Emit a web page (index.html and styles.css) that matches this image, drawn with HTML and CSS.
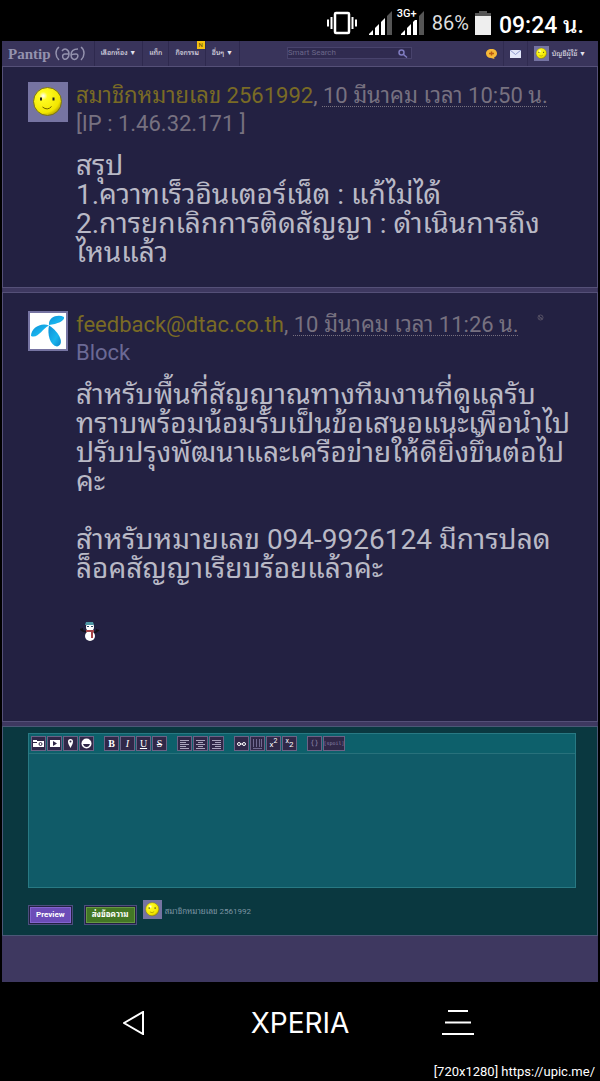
FILE: index.html
```html
<!DOCTYPE html>
<html lang="th">
<head>
<meta charset="utf-8">
<meta name="viewport" content="width=device-width, initial-scale=1">
<title>Pantip</title>
<link rel="stylesheet" href="styles.css">
</head>
<body>
<svg class="defs" width="0" height="0" aria-hidden="true">
  <defs>
    <radialGradient id="sun" cx="35%" cy="30%" r="75%"><stop offset="0" stop-color="#fff" /><stop offset=".2" stop-color="#fffb20" /><stop offset=".8" stop-color="#f2e600" /><stop offset="1" stop-color="#b3a000" /></radialGradient>
    <linearGradient id="petal" x1="0" y1="0" x2="1" y2="1"><stop offset="0" stop-color="#0d8fd6" /><stop offset=".6" stop-color="#19b5ee" /><stop offset="1" stop-color="#0a84c8" /></linearGradient>
  </defs>
  <symbol id="smiley" viewBox="0 0 40 40">
    <rect width="40" height="40" fill="#7674a2" />
    <circle cx="19.500" cy="19.500" r="14" fill="url(#sun)" stroke="#77701c" />
    <path d="M13 15.500v3M25.500 15.500v3" stroke="#222" stroke-width="2" />
    <path d="M14.500 25q5 4 9-.5" fill="none" stroke="#706000" />
  </symbol>
</svg>

<header class="status">
  <svg width="30" height="24" viewBox="0 0 30 24" fill="none" stroke="#fff" stroke-width="2"><rect x="8" y="2" width="14" height="20" rx="1" stroke-width="2.500" /><path d="M4.500 6v12M1 8.500v7M25.500 6v12M29 8.500v7" /></svg>
  <svg class="signal-a" width="23" height="24" viewBox="0 0 23 24"><path fill="#fff" d="M0 24v-1l4-4v5zM6 24v-7l4-4v11zM12 24V11l4-4v17z" /><path fill="#555" d="M18 24V5l5-5v24z" /></svg>
  <div class="mobile">
    <svg width="23" height="24" viewBox="0 0 23 24"><path fill="#fff" d="M0 24v-1l4-4v5zM6 24v-7l4-4v11zM12 24V11l4-4v17z" /><path fill="#555" d="M18 24V5l5-5v24z" /></svg>
    <span>3G+</span>
  </div>
  <span class="percent">86%</span>
  <svg width="16" height="24" viewBox="0 0 16 24"><path fill="#555" d="M4 0h8v2h4v4H0V2h4z" /><path fill="#eee" d="M0 5h16v19H0z" /></svg>
  <span class="clock">09:24 น.</span>
</header>

<main class="screen">
  <nav class="topbar">
    <a class="brand" href="#">Pantip
      <svg width="30" height="15" viewBox="0 0 30 15" fill="none" stroke="currentColor" stroke-width="1.500"><path d="M4 1C0 4 0 10 4 14M26 1c4 3 4 9 0 13" /><path d="M7 5c3-4 7-1 7 3s-3 6-5 5-2-5 1-5h4M23 3c-4 0-7 2-7 6s3 5 5 4 3-5 0-5-5 0-5 2" /></svg>
    </a>
    <a class="item" href="#">เลือกห้อง ▼</a>
    <a class="item" href="#">แท็ก</a>
    <a class="item flagged" href="#">กิจกรรม<span class="flag">N</span></a>
    <a class="item last" href="#">อื่นๆ ▼</a>
    <form class="search">
      <input type="search" placeholder="Smart Search" aria-label="Smart Search">
      <button type="button" aria-label="Search"><svg width="10" height="9" viewBox="0 0 10 9" fill="none" stroke="#807cc0" stroke-width="1.500"><circle cx="3.500" cy="3.500" r="2.500" /><path d="M5.500 5.500 9 8.500" /></svg></button>
    </form>
    <a class="mini" href="#" aria-label="Chat"><svg width="11" height="10" viewBox="0 0 11 10"><path fill="#f6b938" d="M5.500 0C9 0 11 2 11 4.500 11 6.500 9.500 8 8 8.500L8.500 10 5 9C2 9 0 7 0 4.500S2 0 5.500 0z" /><path stroke="#b85b13" stroke-width="1.500" d="M5.500 2.500v4M3 4.500h5" /></svg></a>
    <a class="mini" href="#" aria-label="Mail"><svg width="11" height="8" viewBox="0 0 11 8"><path fill="#e4e8fa" d="M0 0h11v8H0z" /><path fill="none" stroke="#8f9bcf" d="m0 0 5.500 4.500L11 0" /></svg></a>
    <a class="account" href="#"><svg width="15" height="15"><use href="#smiley" /></svg>บัญชีผู้ใช้ ▼</a>
  </nav>

  <article class="post">
    <svg class="avatar" width="40" height="40" role="img" aria-label="avatar"><use href="#smiley" /></svg>
    <div class="content">
      <div class="meta"><a class="author" href="#">สมาชิกหมายเลข 2561992</a>, <abbr>10 มีนาคม เวลา 10:50 น.</abbr><br>[IP : 1.46.32.171 ]</div>
      <p>สรุป<br>1.ควาทเร็วอินเตอร์เน็ต : แก้ไม่ได้<br>2.การยกเลิกการติดสัญญา : ดำเนินการถึง<br>ไหนแล้ว</p>
    </div>
  </article>

  <article class="post reply">
    <svg class="avatar" width="40" height="40" viewBox="0 0 40 40" role="img" aria-label="dtac"><rect x="1" y="1" width="38" height="38" fill="#fff" stroke="#7674a2" stroke-width="2" /><g fill="url(#petal)"><path d="M21 14C20 6 30 3 36 6c1 4-7 7-15 8z" /><path d="M21 14.500C13 11 3 17 3 25c7 3 11-7 18-10.500z" /><path d="M21 14.500c-2 9 1 20 8 21 8-2 3-14-8-21z" /></g></svg>
    <div class="content">
      <div class="meta"><a class="author" href="#">feedback@dtac.co.th</a>, <abbr>10 มีนาคม เวลา 11:26 น.</abbr><br><a class="block" href="#">Block</a></div>
      <p>สำหรับพื้นที่สัญญาณทางทีมงานที่ดูแลรับ<br>ทราบพร้อมน้อมรับเป็นข้อเสนอแนะเพื่อนำไป<br>ปรับปรุงพัฒนาและเครือข่ายให้ดียิ่งขึ้นต่อไป<br>ค่ะ</p>
      <p>สำหรับหมายเลข 094-9926124 มีการปลด<br>ล็อคสัญญาเรียบร้อยแล้วค่ะ</p>
      <svg class="snowman" width="20" height="20" viewBox="0 0 20 20"><path d="M0 8l3 2 4 1M19 9l-3 2-4 1M2 7l1 3M17 8l-1 3" stroke="#14111a" stroke-width="1.500" fill="none" /><circle cx="10" cy="15" r="5" fill="#fff" /><circle cx="10" cy="6" r="4" fill="#fff" /><path d="M6 1h7l1 3H5z" fill="#4f98a5" /><path d="M7 5h2v1H7zM11 5h2v1h-2z" fill="#2c4862" /><path d="M6 9h8v2h-1v6h-2v-6H6z" fill="#a64448" /></svg>
    </div>
    <svg class="ban" width="7" height="7" viewBox="0 0 7 7" fill="none" stroke="#555064"><circle cx="3.500" cy="3.500" r="2.500" /><path d="m1.500 1.500 4 4M2 4h3" /></svg>
  </article>

  <form class="compose">
    <div class="editor">
      <div class="tools">
        <div class="group">
          <button type="button" aria-label="Photo"><svg viewBox="0 0 13 13"><path fill="#fff" d="M1 4V3h4v1h7v6H1z" /><path fill="#302848" d="M1 5h4v1H1z" /><circle cx="8.500" cy="7" r="1.500" fill="#fff" stroke="#302848" /></svg></button>
          <button type="button" aria-label="Video"><svg viewBox="0 0 13 13"><path fill="#fff" d="M2 3h10v7H2z" /><path fill="#302848" d="m5 4 4 2.500L5 9z" /></svg></button>
          <button type="button" aria-label="Map"><svg viewBox="0 0 13 13"><path fill="#fff" d="M6.500 11C5 8 4 6.500 4 4.500a2.500 2.500 0 0 1 5 0c0 2-1 3.500-2.500 6.500z" /><circle cx="6.500" cy="4.500" r="1" fill="#302848" /></svg></button>
          <button type="button" aria-label="Emoticon"><svg viewBox="0 0 13 13"><circle cx="6.500" cy="6.500" r="5" fill="#fff" /><path fill="#302848" d="M3 7h7q-1 3-3.500 3T3 7z" /></svg></button>
        </div>
        <div class="group">
          <button type="button" class="bold">B</button>
          <button type="button" class="italic">I</button>
          <button type="button" class="under">U</button>
          <button type="button" class="strike">S</button>
        </div>
        <div class="group">
          <button type="button" aria-label="Left"><svg viewBox="0 0 13 13"><path stroke="#aaa5bd" d="M2 3.500h9M2 5.500h6M2 7.500h9M2 9.500h6M2 11.500h9" /></svg></button>
          <button type="button" aria-label="Center"><svg viewBox="0 0 13 13"><path stroke="#aaa5bd" d="M2 3.500h9M4 5.500h5M2 7.500h9M4 9.500h5M2 11.500h9" /></svg></button>
          <button type="button" aria-label="Right"><svg viewBox="0 0 13 13"><path stroke="#aaa5bd" d="M2 3.500h9M5 5.500h6M2 7.500h9M5 9.500h6M2 11.500h9" /></svg></button>
        </div>
        <div class="group">
          <button type="button" aria-label="Link"><svg viewBox="0 0 13 13" fill="none" stroke="#fff"><rect x="2.500" y="5.500" width="3" height="3" rx="1.500" /><rect x="7.500" y="5.500" width="3" height="3" rx="1.500" /><path d="M5 7h3" /></svg></button>
          <button type="button" aria-label="Table"><svg viewBox="0 0 13 13"><path stroke="#716b92" d="M2.500 2v8M5.500 2v8M8.500 2v8M10.500 2v8M2 11.500h9" /></svg></button>
          <button type="button" class="script">x<sup>2</sup></button>
          <button type="button" class="script sub"><sup>x</sup>2</button>
        </div>
        <div class="group">
          <button type="button" class="code">{}</button>
          <button type="button" class="code spoil">[spoil]</button>
        </div>
      </div>
      <textarea aria-label="Message"></textarea>
    </div>
    <div class="actions">
      <button type="button" class="send preview"><span>Preview</span></button>
      <button type="button" class="send submit"><span>ส่งข้อความ</span></button>
      <svg class="self" width="19" height="19"><use href="#smiley" /></svg>
      <span class="name">สมาชิกหมายเลข 2561992</span>
    </div>
  </form>
</main>

<nav class="keys">
  <button type="button" aria-label="Back"><svg width="21" height="24" viewBox="0 0 21 24" fill="none" stroke="#fff" stroke-width="2"><path d="M1 12 20 1v22z" /></svg></button>
  <button type="button" class="xperia">XPERIA</button>
  <button type="button" aria-label="Menu"><svg width="32" height="25" viewBox="0 0 32 25" stroke="#fff" stroke-width="2"><path d="M6 1h20M3 12.500h26M0 24h32" /></svg></button>
</nav>
<footer class="source">[720x1280] https://upic.me/</footer>
</body>
</html>
```

FILE: styles.css
```css
* { box-sizing: border-box; }
body { margin: 0; background: #000; color: #b9b9c6; font-family: Roboto, "Noto Sans Thai Looped", "Droid Sans Thai", "Noto Sans Thai", "Noto Sans", sans-serif; }
a { color: inherit; text-decoration: none; }
button { font: inherit; color: inherit; padding: 0; border: 0; background: none; }
svg { display: block; flex: none; }
p { margin: 0; }
.defs { position: absolute; }

.status { display: flex; align-items: center; justify-content: flex-end; gap: 8px; height: 41px; padding: 4px 16px 0 0; color: #fff; }
.signal-a { margin-left: 4px; }
.mobile { position: relative; margin-left: 1px; }
.mobile span { position: absolute; left: -4px; top: -3px; font-size: 11px; line-height: 12px; font-weight: 500; background: #000; }
.percent { margin-right: -2px; font-size: 20px; color: #ddd; }
.clock { font-size: 23px; font-weight: 500; }

.screen { margin: 0 2px; padding-bottom: 46px; background: #3e3860; }
.topbar { display: flex; align-items: stretch; height: 25px; background: #39345b; color: #e4e2ee; font-size: 7px; line-height: 24px; }
.brand { display: flex; align-items: center; gap: 4px; padding: 0 9px 0 6px; color: #9492ae; font: bold 15px/24px "Liberation Serif", serif; border-right: 1px solid #2e294e; }
.item { padding: 0 6px; border-right: 1px solid #2e294e; white-space: nowrap; }
.flagged { position: relative; }
.flag { position: absolute; top: 0; right: 0; padding: 0 2px; background: #f5c211; color: #5a4710; font-size: 6px; line-height: 8px; }
.search { display: flex; align-items: center; flex: 0 1 121px; height: 12px; margin: 6px 0 0 auto; background: #302b50; border: 1px solid #48436c; }
.search input { flex: 1; min-width: 0; padding: 0; border: 0; background: none; font: 8px/10px Roboto, sans-serif; color: #77739a; }
.search input::placeholder { color: #6b6789; }
.search button { padding-right: 3px; }
.mini { display: flex; align-items: center; justify-content: center; width: 24px; border-right: 1px solid #302b50; }
.search + .mini { margin-left: 68px; }
.account { display: flex; align-items: center; gap: 3px; padding: 0 12px 0 6px; white-space: nowrap; }

.post { position: relative; display: flex; align-items: flex-start; gap: 8px; min-height: 222px; padding: 15px 20px 18px 25px; background: #232142; border: 1px solid #555078; }
.reply { margin-top: 4px; min-height: 430px; padding-top: 18px; }
.content { flex: 1; min-width: 0; }
.meta { font-size: 22px; line-height: 28px; color: #777180; white-space: nowrap; }
.author { color: #7a6b25; }
.meta abbr { text-decoration: underline dotted 1px; text-underline-offset: 3px; }
.block { color: #6b6995; }
.content p { margin-top: 13px; font-size: 28px; line-height: 29px; white-space: nowrap; }
.content p + p { margin-top: 29px; }
.snowman { margin: 38px 0 0 4px; }
.ban { position: absolute; top: 21px; right: 53px; }

.compose { margin-top: 4px; padding: 6px 21px 10px 25px; background: #0a3840; border: 1px solid #4b5877; }
.editor { border: 1px solid #287983; background: #105b68; }
.tools { display: flex; flex-wrap: wrap; gap: 10px; padding: 2px; border-bottom: 1px solid #28717b; background: #0d606b; }
.group { display: flex; gap: 1px; }
.group button { display: flex; align-items: center; justify-content: center; width: 15px; height: 15px; border: 1px solid #6b6286; background: #302848; color: #fff; font: 10px/13px "Liberation Serif", serif; }
.group svg { width: 13px; height: 13px; }
.group .bold { font-weight: bold; }
.group .italic { font-style: italic; }
.group .under { text-decoration: underline; }
.group .strike { text-decoration: line-through; }
.group .script { font: 8px/10px Roboto, sans-serif; align-items: flex-end; }
.group sup { align-self: flex-start; font-size: 7px; line-height: 8px; }
.group .code { font: 7px/13px "DejaVu Sans Mono", monospace; color: #8d86ae; }
.group .spoil { width: 22px; font-size: 5px; }
textarea { display: block; width: 100%; height: 133px; border: 0; padding: 4px; resize: none; background: none; color: #fff; }
.actions { display: flex; align-items: flex-start; padding-top: 12px; }
.send { margin-top: 5px; padding: 1px; border: 1px solid #4d4d7e; background: #232142; color: #fff; font-size: 8px; font-weight: bold; }
.send span { display: block; padding: 0 5px; line-height: 14px; }
.preview span { background: #6c4cb8; border: 1px solid #8264cf; }
.submit { margin-left: 11px; }
.submit span { background: #437725; border: 1px solid #659942; }
.self { margin-left: 6px; }
.name { margin-left: 3px; padding-top: 5px; font-size: 8px; line-height: 14px; color: #7d95a4; }

.keys { display: grid; grid-template-columns: 1fr 125px 1fr; gap: 79px; align-items: center; height: 81px; color: #fff; }
.keys button:first-child { justify-self: end; margin-right: 15px; }
.xperia { font: 28px/32px Inter, sans-serif; }
.source { padding-right: 5px; text-align: right; color: #fff; font-size: 13px; line-height: 18px; }
```
